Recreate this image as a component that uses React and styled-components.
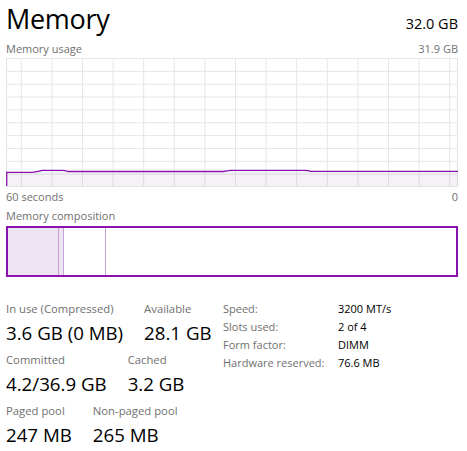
import React from "react";
import styled, { createGlobalStyle } from "styled-components";

const Global = createGlobalStyle`
  html, body {
    margin: 0;
    padding: 0;
    background: #ffffff;
  }
  body {
    font-family: "Open Sans", "Noto Sans", sans-serif;
    color: #000;
  }
`;

const PURPLE = "#8b12ae";

const Pane = styled.div`
  width: 452px;
  padding: 0 9px 0 6px;
`;

const Header = styled.div`
  display: flex;
  justify-content: space-between;
  align-items: baseline;
  height: 39px;
`;

const Title = styled.h1`
  margin: 0;
  font-size: 27px;
  font-weight: 400;
  line-height: 38px;
  letter-spacing: -0.3px;
`;

const Total = styled.span`
  font-size: 14.5px;
  line-height: 38px;
`;

const CaptionRow = styled.div`
  display: flex;
  justify-content: space-between;
  font-size: 11px;
  color: #707070;
  line-height: 19px;
  height: ${(p) => p.$h || 19}px;
`;

const Chart = styled.svg`
  display: block;
  width: 452px;
  height: 129px;
`;

const Composition = styled.div`
  display: flex;
  height: 47px;
  border: 2px solid ${PURPLE};
  margin-top: 2px;
`;

const Segment = styled.div`
  flex: ${(p) => (p.$grow ? 1 : "none")};
  width: ${(p) => p.$w || 0}px;
  background: ${(p) => (p.$used ? "#ede4f2" : "#ffffff")};
  border-right: ${(p) => (p.$last ? "none" : "1px solid #c9a3d8")};
`;

const Stats = styled.div`
  display: flex;
  margin-top: 23px;
`;

const LeftStats = styled.div`
  width: 217px;
  display: flex;
  flex-direction: column;
  gap: 4px;
`;

const StatRow = styled.div`
  display: flex;
  gap: 21px;
`;

const Stat = styled.div`
  display: flex;
  flex-direction: column;
`;

const Label = styled.span`
  font-size: 11.3px;
  color: #707070;
  line-height: 18px;
  white-space: nowrap;
`;

const Value = styled.span`
  font-size: 18.7px;
  line-height: 29px;
  white-space: nowrap;
`;

const Specs = styled.div`
  display: grid;
  grid-template-columns: 115px auto;
  grid-auto-rows: 18px;
  font-size: 11px;
  line-height: 18px;
  margin-top: 0;
`;

const SpecKey = styled.span`
  color: #707070;
`;

const SpecVal = styled.span`
  color: #000;
`;

function UsageChart() {
  const w = 452;
  const h = 129;
  const vx = Array.from({ length: 15 }, (_, i) => 15.3 + 30.6 * i);
  const hy = Array.from({ length: 10 }, (_, i) => 12.85 * i);
  const line =
    "M0 114.3 L26 114.3 Q31 113.6 36 112.3 L57 112.3 Q61 112.6 62 113.5 L217 113.5 Q221 112.5 225 112.3 L299 112.3 Q302 112.5 305 113.3 L452 113.3";
  return (
    <Chart viewBox={`0 0 ${w} ${h}`}>
      <rect x="0.5" y="0.5" width={w - 1} height={h - 1} fill="#fff" stroke="#e2e2e2" />
      {vx.map((x) => (
        <line key={x} x1={x} y1="0" x2={x} y2={h} stroke="#e6e6e6" strokeWidth="1" />
      ))}
      {hy.map((y) => (
        <line key={y} x1="0" y1={y + 0.5} x2={w} y2={y + 0.5} stroke="#e6e6e6" strokeWidth="1" />
      ))}
      <path d={`${line} L452 ${h - 1} L0 ${h - 1} Z`} fill="rgba(120,90,140,0.08)" />
      <path d={line} fill="none" stroke={PURPLE} strokeWidth="1.3" />
      <line x1="0.7" y1="114.3" x2="0.7" y2={h - 1} stroke={PURPLE} strokeWidth="1.3" />
    </Chart>
  );
}

export default function App() {
  return (
    <>
      <Global />
      <Pane>
        <Header>
          <Title>Memory</Title>
          <Total>32.0 GB</Total>
        </Header>
        <CaptionRow>
          <span>Memory usage</span>
          <span>31.9 GB</span>
        </CaptionRow>
        <UsageChart />
        <CaptionRow $h={19}>
          <span>60 seconds</span>
          <span>0</span>
        </CaptionRow>
        <CaptionRow $h={18}>
          <span>Memory composition</span>
        </CaptionRow>
        <Composition>
          <Segment $used $w={50} />
          <Segment $used $w={4} />
          <Segment $w={41} />
          <Segment $grow $last />
        </Composition>
        <Stats>
          <LeftStats>
            <StatRow>
              <Stat>
                <Label>In use (Compressed)</Label>
                <Value>3.6 GB (0 MB)</Value>
              </Stat>
              <Stat>
                <Label>Available</Label>
                <Value>28.1 GB</Value>
              </Stat>
            </StatRow>
            <StatRow>
              <Stat>
                <Label>Committed</Label>
                <Value>4.2/36.9 GB</Value>
              </Stat>
              <Stat>
                <Label>Cached</Label>
                <Value>3.2 GB</Value>
              </Stat>
            </StatRow>
            <StatRow>
              <Stat>
                <Label>Paged pool</Label>
                <Value>247 MB</Value>
              </Stat>
              <Stat>
                <Label>Non-paged pool</Label>
                <Value>265 MB</Value>
              </Stat>
            </StatRow>
          </LeftStats>
          <Specs>
            <SpecKey>Speed:</SpecKey>
            <SpecVal>3200 MT/s</SpecVal>
            <SpecKey>Slots used:</SpecKey>
            <SpecVal>2 of 4</SpecVal>
            <SpecKey>Form factor:</SpecKey>
            <SpecVal>DIMM</SpecVal>
            <SpecKey>Hardware reserved:</SpecKey>
            <SpecVal>76.6 MB</SpecVal>
          </Specs>
        </Stats>
      </Pane>
    </>
  );
}
